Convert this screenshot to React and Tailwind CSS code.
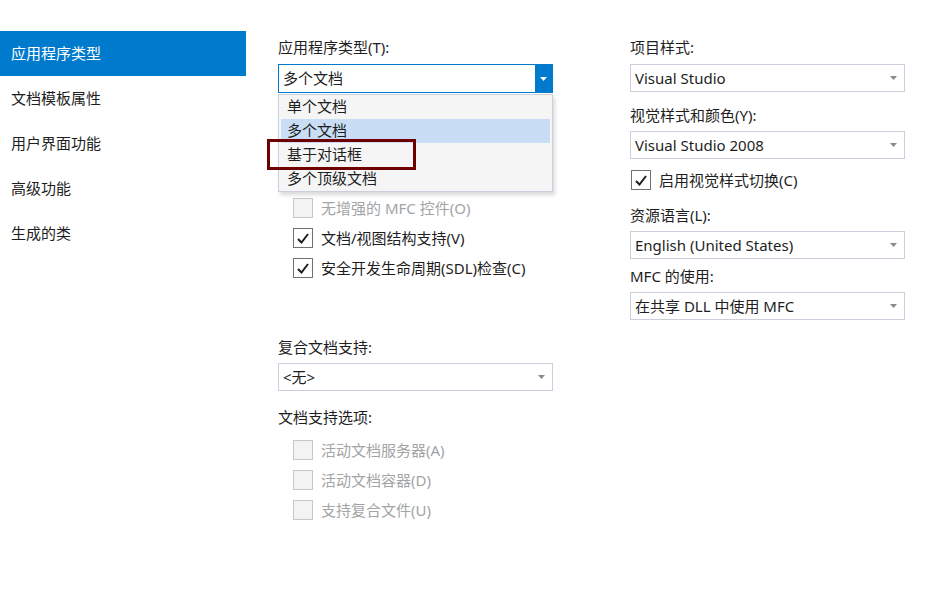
import React from 'react';

const font = { fontFamily: '"Noto Sans", "Noto Sans CJK SC", sans-serif' };

const navItems = ['应用程序类型', '文档模板属性', '用户界面功能', '高级功能', '生成的类'];

function Arrow({ white }) {
  return (
    <svg width="7" height="4" viewBox="0 0 7 4">
      <path d="M0 0 H7 L3.5 4 Z" fill={white ? '#ffffff' : '#8a8a8a'} />
    </svg>
  );
}

function Combo({ value, className = '' }) {
  return (
    <div className={`h-[28px] border border-[#cccedb] bg-white flex items-center justify-between pl-[4px] pr-[7px] ${className}`}>
      <span className="text-[15px] text-[#1e1e1e]">{value}</span>
      <Arrow />
    </div>
  );
}

function Check({ label, checked, disabled }) {
  return (
    <div className="h-[30px] flex items-center gap-2">
      <div
        className={`w-5 h-5 flex items-center justify-center border ${
          disabled ? 'border-[#c6c6c6] bg-[#f3f3f3]' : 'border-[#717171] bg-white'
        }`}
      >
        {checked && (
          <svg width="12" height="11" viewBox="0 0 12 11">
            <path d="M1 6 L4.5 9.5 L11 1" stroke="#1e1e1e" strokeWidth="2" fill="none" />
          </svg>
        )}
      </div>
      <span className={`text-[15px] ${disabled ? 'text-[#a2a4a5]' : 'text-[#1e1e1e]'}`}>{label}</span>
    </div>
  );
}

export default function App() {
  return (
    <div className="w-[950px] h-[611px] bg-white flex overflow-hidden" style={font}>
      {/* Left navigation */}
      <nav className="w-[246px] pt-[31px] flex flex-col">
        {navItems.map((item, i) => (
          <div
            key={item}
            className={`h-[45px] flex items-center pl-[11px] text-[15px] ${
              i === 0 ? 'bg-[#007acc] text-white' : 'text-[#1e1e1e]'
            }`}
          >
            {item}
          </div>
        ))}
      </nav>

      {/* Left column */}
      <div className="ml-[32px] w-[275px] pt-[37px] flex flex-col">
        <div className="h-5 flex items-center text-[15px] text-[#1e1e1e]">应用程序类型(T):</div>
        <div className="relative mt-[7px]">
          <div className="h-[29px] border border-[#007acc] bg-white flex items-center">
            <span className="flex-1 pl-[4px] text-[15px] text-[#1e1e1e]">多个文档</span>
            <div className="w-[17px] h-full bg-[#007acc] flex items-center justify-center">
              <Arrow white />
            </div>
          </div>
          {/* Open dropdown list */}
          <div className="absolute left-0 top-[30px] w-[275px] border border-[#cccedb] bg-[#f5f5f5] px-[2px] shadow-[2px_3px_4px_rgba(0,0,0,0.15)] z-10">
            {['单个文档', '多个文档', '基于对话框', '多个顶级文档'].map((opt, i) => (
              <div
                key={opt}
                className={`h-6 flex items-center pl-[6px] pb-px text-[15px] text-[#1e1e1e] ${i === 1 ? 'bg-[#c9def5]' : ''}`}
              >
                {opt}
              </div>
            ))}
            <div className="absolute left-[-12px] top-[44px] w-[149px] h-[31px] border-[3px] border-[#6e0000]" />
          </div>
        </div>

        <div className="mt-[100px] pl-[15px] flex flex-col">
          <Check label="无增强的 MFC 控件(O)" disabled />
          <Check label="文档/视图结构支持(V)" checked />
          <Check label="安全开发生命周期(SDL)检查(C)" checked />
        </div>

        <div className="mt-[54px] h-5 flex items-center text-[15px] text-[#1e1e1e]">复合文档支持:</div>
        <Combo value="<无>" className="mt-[6px]" />
        <div className="mt-[16px] h-5 flex items-center text-[15px] text-[#1e1e1e]">文档支持选项:</div>
        <div className="mt-[8px] pl-[15px] flex flex-col">
          <Check label="活动文档服务器(A)" disabled />
          <Check label="活动文档容器(D)" disabled />
          <Check label="支持复合文件(U)" disabled />
        </div>
      </div>

      {/* Right column */}
      <div className="ml-[77px] w-[275px] pt-[37px] flex flex-col">
        <div className="h-5 flex items-center text-[15px] text-[#1e1e1e]">项目样式:</div>
        <Combo value="Visual Studio" className="mt-[7px]" />
        <div className="mt-[13px] h-5 flex items-center text-[15px] text-[#1e1e1e]">视觉样式和颜色(Y):</div>
        <Combo value="Visual Studio 2008" className="mt-[6px]" />
        <div className="mt-[6px] pl-px">
          <Check label="启用视觉样式切换(C)" checked />
        </div>
        <div className="mt-[10px] h-5 flex items-center text-[15px] text-[#1e1e1e]">资源语言(L):</div>
        <Combo value="English (United States)" className="mt-[6px]" />
        <div className="mt-[7px] h-5 flex items-center text-[15px] text-[#1e1e1e]">MFC 的使用:</div>
        <Combo value="在共享 DLL 中使用 MFC" className="mt-[6px]" />
      </div>
    </div>
  );
}
